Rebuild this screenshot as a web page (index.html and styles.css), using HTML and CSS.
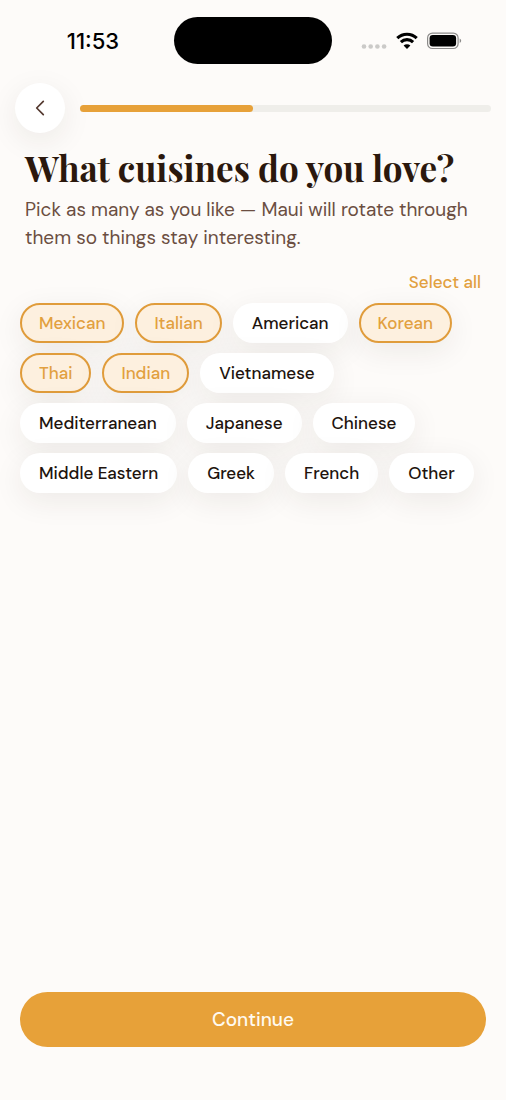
FILE: index.html
```html
<!DOCTYPE html>
<html lang="en">
<head>
<meta charset="utf-8">
<meta name="viewport" content="width=device-width, initial-scale=1">
<title>What cuisines do you love?</title>
<link rel="stylesheet" href="styles.css">
</head>
<body>
<div class="screen">
  <div class="status-bar">
    <div class="status-time">11:53</div>
    <div class="island"></div>
    <div class="status-icons">
      <svg class="dots" width="26" height="18" viewBox="0 0 26 18" aria-hidden="true">
        <g fill="#cbcac8"><circle cx="3" cy="14.500" r="2.300"/><circle cx="9.700" cy="14.500" r="2.300"/><circle cx="16.400" cy="14.500" r="2.300"/><circle cx="23.100" cy="14.500" r="2.300"/></g>
      </svg>
      <svg width="22" height="18" viewBox="0 0 22 18" aria-hidden="true">
        <g fill="none" stroke="#000" stroke-width="3.100">
          <path d="M1.300 6.200A13.800 13.800 0 0 1 20.700 6.200"/>
          <path d="M4.900 10.100A8.700 8.700 0 0 1 17.100 10.100"/>
        </g>
        <path d="M11 17L7.600 13.500A4.900 4.900 0 0 1 14.400 13.500Z" fill="#000"/>
      </svg>
      <svg width="35" height="18" viewBox="0 0 35 18" aria-hidden="true">
        <rect x=".6" y="1.100" width="30.500" height="15.400" rx="4.800" fill="none" stroke="#8b8a89" stroke-width="1.200"/>
        <rect x="2.600" y="3.100" width="26.500" height="11.400" rx="3.200" fill="#000"/>
        <path d="M32.700 6.600c2 .8 2 3.600 0 4.400z" fill="#8b8a89"/>
      </svg>
    </div>
  </div>

  <header class="top-nav">
    <button class="back" type="button" aria-label="Back">
      <svg width="10" height="16" viewBox="0 0 10 16" aria-hidden="true"><path d="M8.300 1.400L1.700 8l6.600 6.600" fill="none" stroke="#54392f" stroke-width="1.700" stroke-linecap="round" stroke-linejoin="round"/></svg>
    </button>
    <div class="progress" role="progressbar" aria-label="Setup progress" aria-valuemin="0" aria-valuemax="100" aria-valuenow="42">
      <div class="progress-fill" style="width:42%"></div>
    </div>
  </header>

  <main class="content">
    <div class="intro">
      <h1 class="title">What cuisines do you love?</h1>
      <p class="subtitle">Pick as many as you like — Maui will rotate through them so things stay interesting.</p>
    </div>
    <button class="select-all" type="button">Select all</button>
    <div class="chips" role="group" aria-label="Cuisines">
      <button class="chip chip-on" type="button" aria-pressed="true">Mexican</button>
      <button class="chip chip-on" type="button" aria-pressed="true">Italian</button>
      <button class="chip" type="button" aria-pressed="false">American</button>
      <button class="chip chip-on" type="button" aria-pressed="true">Korean</button>
      <button class="chip chip-on" type="button" aria-pressed="true">Thai</button>
      <button class="chip chip-on" type="button" aria-pressed="true">Indian</button>
      <button class="chip" type="button" aria-pressed="false">Vietnamese</button>
      <button class="chip" type="button" aria-pressed="false">Mediterranean</button>
      <button class="chip" type="button" aria-pressed="false">Japanese</button>
      <button class="chip" type="button" aria-pressed="false">Chinese</button>
      <button class="chip" type="button" aria-pressed="false">Middle Eastern</button>
      <button class="chip" type="button" aria-pressed="false">Greek</button>
      <button class="chip" type="button" aria-pressed="false">French</button>
      <button class="chip" type="button" aria-pressed="false">Other</button>
    </div>
  </main>

  <footer class="footer">
    <button class="continue" type="button">Continue</button>
  </footer>
</div>
</body>
</html>
```
FILE: styles.css
```css
* {
  box-sizing: border-box;
}

body {
  margin: 0;
  background: #fdfbf9;
  color: #21130d;
  font-family: "DM Sans", Inter, "Liberation Sans", sans-serif;
}

button {
  margin: 0;
  padding: 0;
  border: 0;
  background: none;
  font: inherit;
  cursor: pointer;
}

svg {
  display: block;
}

.screen {
  display: flex;
  flex-direction: column;
  min-height: 100vh;
}

.status-bar {
  display: grid;
  grid-template-columns: 1fr 158px 1fr;
  align-items: center;
  padding-top: 17px;
}

.status-time {
  padding-left: 12px;
  text-align: center;
  font-family: Inter, sans-serif;
  font-size: 22px;
  line-height: 24px;
  font-weight: 500;
  color: #000;
}

.island {
  height: 47px;
  border-radius: 24px;
  background: #000;
}

.status-icons {
  display: flex;
  justify-content: flex-end;
  gap: 9px;
  padding-right: 44px;
}

.top-nav {
  display: flex;
  align-items: center;
  gap: 15px;
  padding: 19px 15px 0;
}

.back {
  display: flex;
  align-items: center;
  justify-content: center;
  flex: none;
  width: 50px;
  height: 50px;
  border-radius: 50%;
  background: #fff;
  box-shadow: 0 8px 30px rgba(50, 35, 30, 0.08);
}

.progress {
  flex: 1;
  height: 7px;
  border-radius: 4px;
  background: #efeeea;
}

.progress-fill {
  height: 100%;
  border-radius: 4px;
  background: #e7a139;
}

.content {
  display: flex;
  flex-direction: column;
  flex: 1;
  padding: 11px 20px 0;
}

.intro {
  padding: 0 5px;
}

.title {
  margin: 0;
  font-family: "Playfair Display", "Liberation Serif", serif;
  font-size: 35px;
  line-height: 48px;
  font-weight: 700;
  color: #2b180d;
}

.subtitle {
  margin: 4px 0 0;
  font-size: 19px;
  line-height: 28px;
  color: #6b4e41;
}

.select-all {
  align-self: flex-end;
  margin: 19px 5px 10px;
  font-size: 17px;
  line-height: 22px;
  font-weight: 500;
  color: #e2a03f;
}

.chips {
  display: flex;
  flex-wrap: wrap;
  gap: 10px 11px;
}

.chip {
  height: 40px;
  padding: 0 19px;
  border-radius: 20px;
  background: #fff;
  box-shadow: 0 8px 30px rgba(50, 35, 30, 0.08);
  font-size: 17px;
  line-height: 20px;
  font-weight: 500;
  color: #21130d;
}

.chip-on {
  padding: 0 17px;
  border: 2px solid #e09c3b;
  background: #fdf0df;
  color: #e2a03f;
}

.footer {
  padding: 20px 20px 53px;
}

.continue {
  width: 100%;
  height: 55px;
  border-radius: 28px;
  background: #e7a139;
  font-size: 19px;
  line-height: 24px;
  font-weight: 500;
  color: #fffaf0;
}
```
